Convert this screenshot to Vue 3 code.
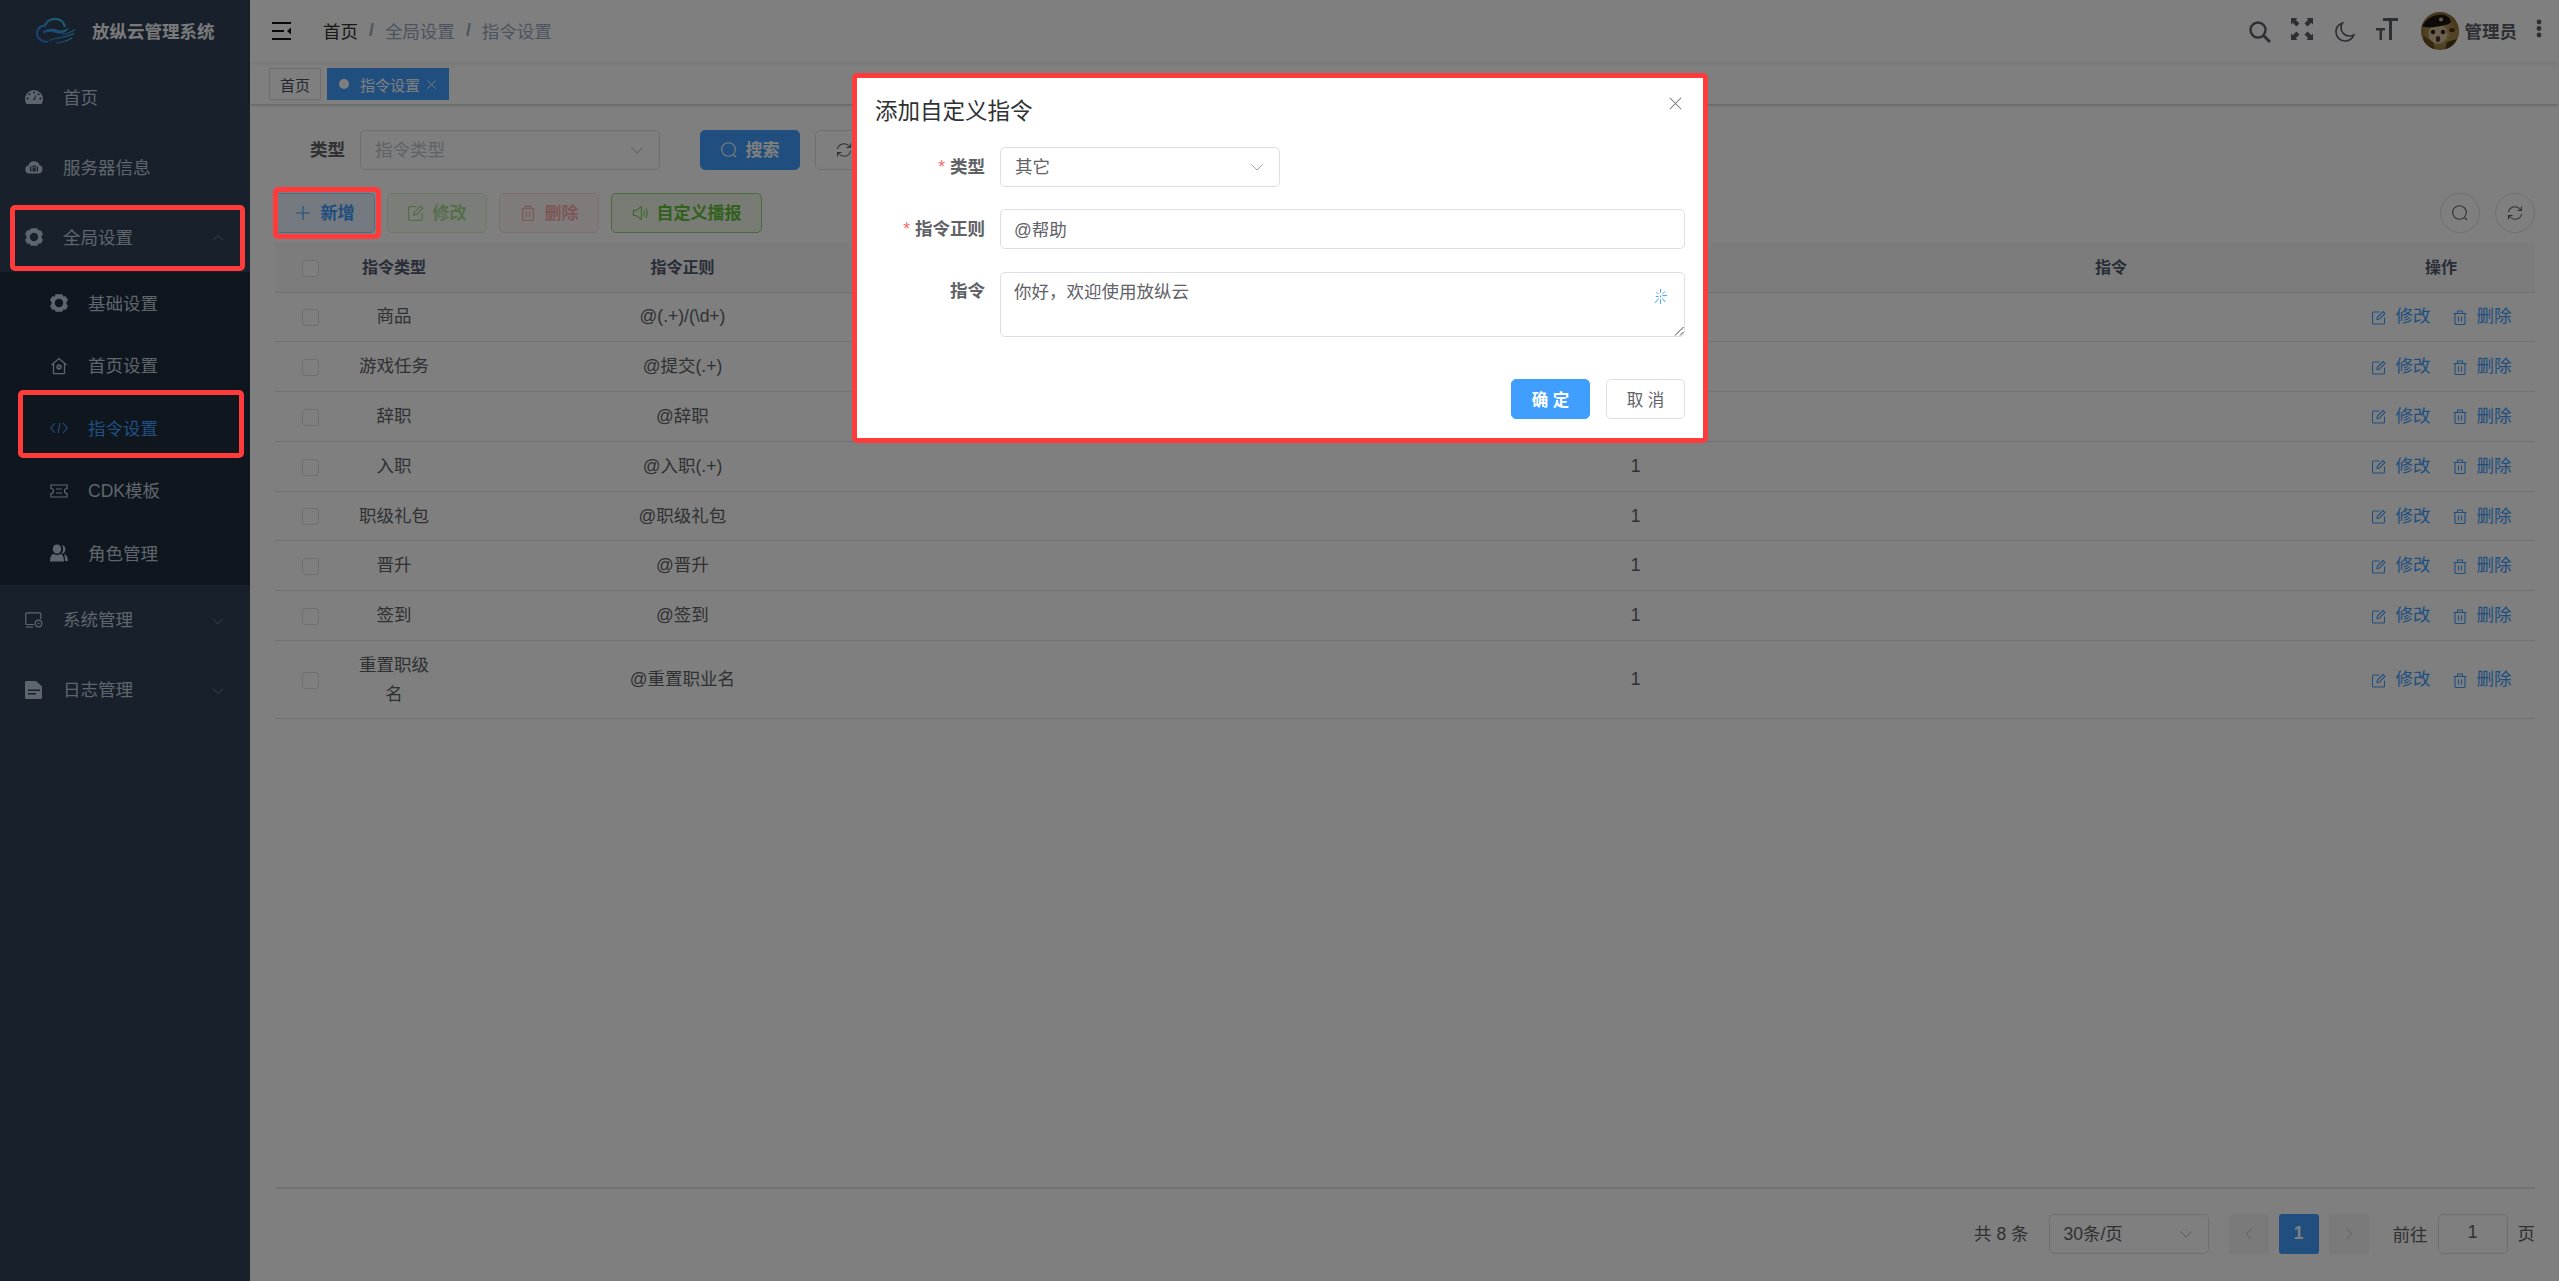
<script setup>
const subMenus = [
  { label: '基础设置', icon: 'i-gear' },
  { label: '首页设置', icon: 'i-home' },
  { label: '指令设置', icon: 'i-code', active: true },
  { label: 'CDK模板', icon: 'i-ticket' },
  { label: '角色管理', icon: 'i-users' }
]
const rows = [
  { type: '商品', reg: '@(.+)/(\\d+)', val: '1' },
  { type: '游戏任务', reg: '@提交(.+)', val: '1' },
  { type: '辞职', reg: '@辞职', val: '1' },
  { type: '入职', reg: '@入职(.+)', val: '1' },
  { type: '职级礼包', reg: '@职级礼包', val: '1' },
  { type: '晋升', reg: '@晋升', val: '1' },
  { type: '签到', reg: '@签到', val: '1' },
  { type: '重置职级名', reg: '@重置职业名', val: '1', tall: true }
]
</script>

<template>
  <div class="app">
    <svg class="sprite" aria-hidden="true">
      <defs>
        <symbol id="i-gauge" viewBox="0 0 18 14">
          <path fill="currentColor" d="M9 0a9 9 0 0 0-9 9c0 1.9.6 3.6 1.600 5h14.800c1-1.400 1.600-3.100 1.600-5a9 9 0 0 0-9-9z"/>
          <g fill="#304156"><circle cx="9" cy="2.400" r="1"/><circle cx="4.400" cy="4.200" r="1"/><circle cx="2.600" cy="8.600" r="1"/><circle cx="15.400" cy="8.600" r="1"/><circle cx="13.600" cy="4.200" r="1"/><path d="M11.500 3.800 10 10h-2z"/></g>
        </symbol>
        <symbol id="i-cloud" viewBox="0 0 18 14">
          <path fill="currentColor" d="M4 13.500a4 4 0 0 1-.6-7.900A5.800 5.800 0 0 1 14.400 5 4.400 4.400 0 0 1 14 13.500z"/>
          <g fill="#304156"><rect x="5" y="6.500" width="1.400" height="5"/><rect x="7.600" y="5.500" width="3" height="6"/><rect x="11.600" y="6.500" width="1.400" height="5"/></g>
          <rect x="8.500" y="7" width="1.200" height="1.200" fill="currentColor"/>
        </symbol>
        <symbol id="i-gear" viewBox="0 0 18 18">
          <path fill="currentColor" fill-rule="evenodd" d="M6.200.3h5.600c.5 0 .9.300 1 .7l.5 1.500 1.600-.3c.5-.1.900.1 1.200.5l1.600 2.800c.2.400.2.900-.1 1.200L16.500 8v2l1.100 1.300c.3.300.3.800.1 1.200l-1.600 2.800c-.3.400-.7.600-1.200.5l-1.600-.3-.5 1.500c-.1.400-.5.700-1 .7H6.200c-.5 0-.9-.3-1-.7l-.5-1.500-1.600.3c-.5.100-.9-.1-1.200-.5L.3 12.500c-.2-.4-.2-.9.100-1.200L1.500 10V8L.4 6.700C.1 6.400.1 5.900.3 5.500l1.600-2.800c.3-.4.700-.6 1.200-.5l1.600.3.5-1.500c.1-.4.500-.7 1-.7zM9 4.800a4.200 4.200 0 1 0 0 8.400 4.200 4.200 0 0 0 0-8.400z"/>
        </symbol>
        <symbol id="i-home" viewBox="0 0 18 18">
          <g fill="none" stroke="currentColor" stroke-width="1.300"><path d="M1.500 8 9 1.500 16.500 8M3.500 6.500V16a.6.6 0 0 0 .6.6h9.800a.6.6 0 0 0 .6-.6V6.500"/><circle cx="9" cy="10" r="2"/></g>
          <circle cx="9" cy="10" r=".8" fill="currentColor"/>
        </symbol>
        <symbol id="i-code" viewBox="0 0 18 12">
          <path fill="none" stroke="currentColor" stroke-width="1.100" d="M5 1 .8 6 5 11M13 1l4.200 5L13 11M10 .8 8 11.200"/>
        </symbol>
        <symbol id="i-ticket" viewBox="0 0 18 14">
          <path fill="none" stroke="currentColor" stroke-width="1.200" d="M1 1h16v3.500a2.500 2.500 0 0 0 0 5V13H1V9.500a2.500 2.500 0 0 0 0-5zM6 5h6M6 9h6"/>
        </symbol>
        <symbol id="i-users" viewBox="0 0 18 17">
          <path fill="currentColor" d="M7 0c2.600 0 4.200 2 4.200 4.500S9.600 9.200 7 9.200 2.800 7 2.800 4.500 4.400 0 7 0zM0 17c0-4 1-6.800 3.500-7.800 1 .9 2.300 1.300 3.500 1.300s2.500-.4 3.500-1.300c2.500 1 3.500 3.800 3.500 7.800z"/>
          <path fill="currentColor" d="M12 .5c2.200.4 3.400 2.200 3.400 4.200s-1 3.700-3.100 4.500l-.6-.5c1-1.100 1.400-2.500 1.400-4S12.600 1.800 12 .5zM14 9.500c2.700.8 3.900 3.300 4 7h-3c0-2.800-.2-5.200-1-7z"/>
        </symbol>
        <symbol id="i-monitor" viewBox="0 0 18 16">
          <g fill="none" stroke="currentColor" stroke-width="1.200"><path d="M9 12.500H1.800a1 1 0 0 1-1-1V1.800a1 1 0 0 1 1-1h13a1 1 0 0 1 1 1V7"/><path d="M1 15h7"/><circle cx="13.500" cy="11.500" r="3.300"/></g>
          <circle cx="13.500" cy="11.500" r="1" fill="currentColor"/>
        </symbol>
        <symbol id="i-doc" viewBox="0 0 18 18">
          <path fill="currentColor" fill-rule="evenodd" d="M1.500 0H11l6 5.500V16.500a1.500 1.500 0 0 1-1.500 1.500h-14A1.500 1.500 0 0 1 0 16.500V1.500A1.500 1.500 0 0 1 1.500 0zM3 8.500v1.500h12V8.500zM3 12v1.500h8V12z"/>
        </symbol>
        <symbol id="i-chev" viewBox="0 0 16 16">
          <polyline fill="none" stroke="currentColor" stroke-width="1" points="1.500,5 8,11.500 14.500,5"/>
        </symbol>
        <symbol id="i-search" viewBox="0 0 16 16">
          <g fill="none" stroke="currentColor" stroke-width="1.100"><circle cx="7.500" cy="7.500" r="6.800"/><path d="M12.500 12.500 15 15"/></g>
        </symbol>
        <symbol id="i-refresh" viewBox="0 0 16 16">
          <path fill="none" stroke="currentColor" stroke-width="1.100" d="M1.500 7A6.500 6.500 0 0 1 12.800 4L14.500 5.500M14.500 1.500v4h-4M14.500 9A6.500 6.500 0 0 1 3.200 12L1.500 10.500M1.500 14.500v-4h4"/>
        </symbol>
        <symbol id="i-edit" viewBox="0 0 14 14">
          <path fill="none" stroke="currentColor" stroke-width="1.100" d="M7.500 1.500H1.500a1 1 0 0 0-1 1v10a1 1 0 0 0 1 1h10a1 1 0 0 0 1-1V7M5 9l.5-2.500L11 1l2 2-5.500 5.500z"/>
        </symbol>
        <symbol id="i-trash" viewBox="0 0 14 15">
          <path fill="none" stroke="currentColor" stroke-width="1.100" d="M.5 3.500h13M4.500 3.500V1h5v2.500M2 3.500V13.500a1 1 0 0 0 1 1h8a1 1 0 0 0 1-1V3.500M5.500 6.500v5M8.500 6.500v5"/>
        </symbol>
        <symbol id="i-speaker" viewBox="0 0 18 18">
          <path fill="none" stroke="currentColor" stroke-width="1.100" d="M5 6H1.500v6H5l5.500 4.500v-15zM13 6c1 1.800 1 4.200 0 6M15.500 3.500c2 3.200 2 7.800 0 11"/>
        </symbol>
        <symbol id="i-sparkle" viewBox="0 0 16 16">
          <path fill="none" stroke="currentColor" stroke-width="1" d="M8 0v4M8 7v2M3 8h3M10 7h5M3.500 3 6 5.500M13 2.500 10 5.500M6 10 2 15M10 10l3 4M8 11v5"/>
        </symbol>
        <symbol id="i-plus" viewBox="0 0 14 14">
          <path fill="none" stroke="currentColor" stroke-width="1.100" d="M7 0v14M0 7h14"/>
        </symbol>
        <symbol id="i-x" viewBox="0 0 10 10">
          <path fill="none" stroke="currentColor" stroke-width="1" d="M.5.5l9 9M9.500.5l-9 9"/>
        </symbol>
      </defs>
    </svg>

    <aside class="sidebar">
      <div class="logo">
        <svg class="logo-mark" viewBox="36 18 40 26">
          <defs>
            <linearGradient id="lg" x1="0" y1="1" x2="1" y2="0">
              <stop offset="0" stop-color="#2f70e0"/>
              <stop offset="1" stop-color="#3cc8f0"/>
            </linearGradient>
          </defs>
          <path fill="none" stroke="url(#lg)" stroke-width="2.200" d="M48 42C41 42 37 38 37 33.500 37 28.500 41 25.500 45 25.500 47 21 51 19 55 19 60 19 64 22 65 27"/>
          <path fill="url(#lg)" d="M43 31C48 28 54 28.500 58 30 62 31.500 65 30 69 27.500 67 32 62 34.500 58 33.500 53 32 48 31 43 34z"/>
          <g fill="none" stroke="url(#lg)" stroke-width="1.200">
            <path d="M49 41C56 36 62 40 74 33.500"/>
            <path d="M56 43.500C62 41 66 42.500 72 38"/>
            <path d="M62 35C66 34.500 70 32.500 75 29.500"/>
          </g>
        </svg>
        <span class="logo-title">放纵云管理系统</span>
      </div>

      <nav class="menu">
        <div class="menu-item"><svg class="m-icon gauge"><use href="#i-gauge"/></svg><span class="m-text">首页</span></div>
        <div class="menu-item"><svg class="m-icon gauge"><use href="#i-cloud"/></svg><span class="m-text">服务器信息</span></div>
        <div class="menu-item">
          <svg class="m-icon"><use href="#i-gear"/></svg><span class="m-text">全局设置</span>
          <svg class="m-arrow up"><use href="#i-chev"/></svg>
        </div>
        <div class="submenu">
          <div v-for="s in subMenus" :key="s.label" class="sub-item" :class="{ active: s.active }">
            <svg class="s-icon" :class="s.icon"><use :href="'#' + s.icon"/></svg><span class="m-text">{{ s.label }}</span>
          </div>
        </div>
        <div class="menu-item">
          <svg class="m-icon"><use href="#i-monitor"/></svg><span class="m-text">系统管理</span>
          <svg class="m-arrow"><use href="#i-chev"/></svg>
        </div>
        <div class="menu-item">
          <svg class="m-icon"><use href="#i-doc"/></svg><span class="m-text">日志管理</span>
          <svg class="m-arrow"><use href="#i-chev"/></svg>
        </div>
      </nav>
    </aside>

    <main class="main">
      <header class="navbar">
        <svg class="hamburger" viewBox="0 0 19 18">
          <path fill="none" stroke="currentColor" stroke-width="1.800" d="M0 1h19M0 9h12M0 17h19"/>
          <path fill="currentColor" d="M15 9l4-3.500v7z"/>
        </svg>
        <div class="crumbs">
          <span class="crumb first">首页</span><i>/</i>
          <span class="crumb">全局设置</span><i>/</i>
          <span class="crumb">指令设置</span>
        </div>
        <div class="right-menu">
          <svg class="tool t-search" viewBox="0 0 22 22"><g fill="none" stroke="currentColor"><circle cx="9" cy="9" r="7.500" stroke-width="2.400"/><path d="M14.500 14.500 21 21" stroke-width="3"/></g></svg>
          <svg class="tool t-full" viewBox="0 0 22 22"><g fill="currentColor"><path d="M0 0h6.500L4.800 1.700 8.500 5.400 5.400 8.500 1.700 4.800 0 6.500z"/><path d="M22 0h-6.500l1.700 1.700-3.700 3.700 3.100 3.100 3.700-3.700L22 6.500z"/><path d="M0 22h6.500l-1.700-1.700 3.700-3.700-3.100-3.100-3.700 3.700L0 15.500z"/><path d="M22 22h-6.500l1.700-1.700-3.700-3.700 3.100-3.100 3.700 3.700 1.700-1.700z"/></g></svg>
          <svg class="tool t-moon" viewBox="0 0 20 20"><path fill="none" stroke="currentColor" stroke-width="1.700" d="M7.500 1C3.500 2.300 1 5.800 1 10c0 5 4 9 9 9 4 0 7.500-2.500 8.800-6-1.300.7-2.800 1-4.300 1C9.500 14 6 10.500 6 5.500 6 4 6.500 2.300 7.500 1z"/></svg>
          <svg class="tool t-font" viewBox="0 0 22 22"><g fill="currentColor"><path d="M7 0h15v3h-6v19h-3V3H7z"/><path d="M0 10h9v2.500H6V22H3.500v-9.500H0z"/></g></svg>
          <svg class="avatar" viewBox="0 0 38 38">
            <defs>
              <radialGradient id="ag" cx="50%" cy="55%" r="60%">
                <stop offset="0" stop-color="#d6b472"/>
                <stop offset="1" stop-color="#80632e"/>
              </radialGradient>
              <clipPath id="ac"><circle cx="19" cy="19" r="19"/></clipPath>
            </defs>
            <g clip-path="url(#ac)">
              <rect width="38" height="38" fill="url(#ag)"/>
              <path d="M0 38 3 24 12 30 14 38z" fill="#6a4c1c"/>
              <path d="M28 14l10 4v10l-8 0z" fill="#a8864a"/>
              <ellipse cx="31" cy="18" rx="3" ry="2" fill="#4a3612"/>
              <path d="M26 30l10-3v11H24z" fill="#4d3a14"/>
              <ellipse cx="17" cy="22" rx="9.500" ry="9.500" fill="#d4c0a0"/>
              <path d="M1 14C5 8 10 3 20 2.500c5 0 9 3 10 7 0 2-6 4-13 5C10 15.500 5 16 1 14z" fill="#1b1612"/>
              <circle cx="20" cy="7.500" r="2" fill="#c8b080"/>
              <circle cx="12" cy="20" r="2.200" fill="#2a2115"/>
              <circle cx="22" cy="20" r="2.200" fill="#2a2115"/>
              <ellipse cx="17" cy="27" rx="2.200" ry="3" fill="#5b2f22"/>
            </g>
          </svg>
          <span class="username">管理员</span>
          <svg class="dots" viewBox="0 0 6 19"><g fill="currentColor"><circle cx="3" cy="3" r="2.400"/><circle cx="3" cy="9.500" r="2.400"/><circle cx="3" cy="16" r="2.400"/></g></svg>
        </div>
      </header>

      <div class="tags">
        <span class="tag">首页</span>
        <span class="tag on"><b class="dot"></b>指令设置<svg class="tag-x"><use href="#i-x"/></svg></span>
      </div>

      <section class="content">
        <div class="query">
          <label class="q-label">类型</label>
          <div class="select q-select"><span class="ph">指令类型</span><svg class="chev"><use href="#i-chev"/></svg></div>
          <button class="btn solid b-search"><svg class="b-i"><use href="#i-search"/></svg><span class="b-t">搜索</span></button>
          <button class="btn b-reset"><svg class="b-i"><use href="#i-refresh"/></svg><span class="b-t">重置</span></button>
        </div>

        <div class="toolbar">
          <button class="btn t-primary"><svg class="b-i plus"><use href="#i-plus"/></svg><span class="b-t">新增</span></button>
          <button class="btn t-green dis"><svg class="b-i"><use href="#i-edit"/></svg><span class="b-t">修改</span></button>
          <button class="btn t-red dis"><svg class="b-i"><use href="#i-trash"/></svg><span class="b-t">删除</span></button>
          <button class="btn t-green wide"><svg class="b-i"><use href="#i-speaker"/></svg><span class="b-t">自定义播报</span></button>
          <div class="tb-right">
            <span class="round"><svg><use href="#i-search"/></svg></span>
            <span class="round"><svg><use href="#i-refresh"/></svg></span>
          </div>
        </div>

        <div class="table-wrap">
          <table class="table">
            <colgroup>
              <col class="c1"><col class="c2"><col class="c3"><col class="c4"><col class="c3"><col class="c6"><col class="c7">
            </colgroup>
            <thead>
              <tr>
                <th><span class="check"></span></th>
                <th>指令类型</th><th>指令正则</th><th>指令名称</th><th>状态</th><th>指令</th><th>操作</th>
              </tr>
            </thead>
            <tbody>
              <tr v-for="r in rows" :key="r.type" :class="{ tall: r.tall }">
                <td><span class="check"></span></td>
                <td>{{ r.type }}</td>
                <td>{{ r.reg }}</td>
                <td></td>
                <td>{{ r.val }}</td>
                <td></td>
                <td>
                  <div class="ops">
                    <span class="op"><svg><use href="#i-edit"/></svg>修改</span>
                    <span class="op"><svg><use href="#i-trash"/></svg>删除</span>
                  </div>
                </td>
              </tr>
            </tbody>
          </table>
        </div>

        <footer class="pager">
          <span class="p-t">共 8 条</span>
          <div class="select p-select"><span class="p-t">30条/页</span><svg class="chev"><use href="#i-chev"/></svg></div>
          <span class="pg"><svg><use href="#i-chev"/></svg></span>
          <span class="pg cur">1</span>
          <span class="pg nx"><svg><use href="#i-chev"/></svg></span>
          <span class="goto p-t">前往</span>
          <span class="p-input"><span class="p-t">1</span></span>
          <span class="p-t">页</span>
        </footer>
      </section>
    </main>

    <div class="overlay">
      <div class="dialog">
        <div class="d-head">
          <span class="d-title">添加自定义指令</span>
          <svg class="d-close" viewBox="0 0 14 14"><path fill="none" stroke="currentColor" stroke-width="1.100" d="M1 1l12 12M13 1 1 13"/></svg>
        </div>
        <div class="d-form">
          <div class="f-row">
            <label class="f-label"><i>*</i>类型</label>
            <div class="select d-select"><span class="p-t">其它</span><svg class="chev"><use href="#i-chev"/></svg></div>
          </div>
          <div class="f-row">
            <label class="f-label"><i>*</i>指令正则</label>
            <div class="d-input">@帮助</div>
          </div>
          <div class="f-row">
            <label class="f-label top">指令</label>
            <div class="d-area">
              你好，欢迎使用放纵云
              <svg class="spark"><use href="#i-sparkle"/></svg>
              <svg class="grip" viewBox="0 0 10 10"><path fill="none" stroke="#444" stroke-width="1" d="M9.500 1 1 9.500M9.500 6 6 9.500"/></svg>
            </div>
          </div>
        </div>
        <div class="d-foot">
          <button class="btn d-ok">确 定</button>
          <button class="btn d-no">取 消</button>
        </div>
      </div>

      <span class="mark m-menu"></span>
      <span class="mark m-sub"></span>
      <span class="mark m-add"></span>
      <span class="mark m-dialog"></span>
    </div>
  </div>
</template>

<style>
html, body { margin: 0; padding: 0; background: #fff; overflow: hidden; }
</style>

<style scoped>
* { box-sizing: border-box; }
.app {
  display: flex;
  width: 2559px;
  height: 1281px;
  overflow: hidden;
  font-family: "Liberation Sans", "Noto Sans CJK SC", sans-serif;
  font-size: 17.5px;
  color: #606266;
}
.sprite { position: absolute; width: 0; height: 0; }

/* sidebar */
.sidebar { width: 250px; flex: none; background: #304156; color: #bfcbd9; }
.logo { height: 62px; display: flex; align-items: center; padding-left: 36px; }
.logo-mark { width: 40px; height: 26px; margin-right: 16px; }
.logo-title { font-weight: 700; font-size: 17.5px; color: #fff; opacity: .95; margin-bottom: 2px; }
.menu-item { height: 70px; display: flex; align-items: center; padding-left: 25px; position: relative; }
.m-text { margin-bottom: 2px; }
.m-icon { width: 18px; height: 18px; margin-right: 20px; flex: none; }
.m-icon.gauge { height: 14px; }
.m-arrow { position: absolute; left: 212px; top: 30px; width: 12px; height: 12px; color: #8f98a3; }
.m-arrow.up { transform: rotate(180deg); }
.submenu { background: #1f2d3d; }
.sub-item { height: 62.5px; display: flex; align-items: center; padding-left: 50px; }
.sub-item.active { color: #409eff; }
.s-icon { width: 18px; height: 18px; margin-right: 20px; flex: none; }
.s-icon.i-code { height: 12px; }
.s-icon.i-ticket { height: 14px; }

/* main */
.main { flex: 1; min-width: 0; display: flex; flex-direction: column; background: #fff; }
.navbar { height: 63px; flex: none; display: flex; align-items: center; padding: 0 17px 2px 22px; box-shadow: 0 1px 4px rgba(0,21,41,.08); position: relative; }
.hamburger { width: 19px; height: 18px; color: #111; margin-right: 32px; }
.crumbs { display: flex; align-items: center; color: #97a8be; }
.crumbs i { font-style: normal; margin: 0 11px; color: #97a8be; font-weight: 700; }
.crumb.first { color: #303133; }
.right-menu { margin-left: auto; display: flex; align-items: center; color: #5a5e66; }
.tool { width: 22px; height: 22px; flex: none; }
.t-search { margin-right: 20px; margin-top: 3px; }
.t-full { margin-right: 22px; margin-top: -3px; }
.t-moon { width: 20px; height: 20px; margin-right: 21px; margin-top: 2px; }
.t-font { margin-right: 23px; margin-top: -3px; }
.avatar { width: 38px; height: 38px; margin-right: 6px; }
.username { font-weight: 700; margin-right: 19px; }
.dots { width: 6px; height: 19px; margin-top: -4px; }

.tags { height: 41px; flex: none; display: flex; align-items: flex-start; gap: 6px; padding: 5px 0 0 19px; font-size: 15px; box-shadow: 0 1px 3px rgba(0,0,0,.24), 0 0 3px rgba(0,0,0,.04); position: relative; }
.tag { height: 32px; padding: 0 10px; border: 1px solid #d8dce5; display: inline-flex; align-items: center; color: #495060; background: #fff; }
.tag.on { background: #409eff; border-color: #409eff; color: #fff; padding: 0 11px; width: 122px; }
.dot { width: 10px; height: 10px; border-radius: 50%; background: #fff; margin-right: 11px; flex: none; }
.tag-x { width: 9px; height: 9px; margin-left: 7px; flex: none; }

.content { flex: 1; min-height: 0; display: flex; flex-direction: column; padding: 26px 24px 28px 25px; }
.query { display: flex; align-items: center; height: 40px; }
.q-label { padding-left: 35px; width: 85px; font-weight: 700; color: #606266; flex: none; white-space: nowrap; margin-bottom: 3px; }
.select { border: 1px solid #dcdfe6; border-radius: 5px; height: 40px; display: flex; align-items: center; padding: 0 14px; position: relative; background: #fff; color: #606266; }
.q-select { width: 300px; margin-right: 40px; }
.ph { color: #c0c4cc; margin-bottom: 3px; }
.chev { width: 14px; height: 14px; position: absolute; right: 15px; top: 12px; color: #a0a4ac; }
.btn { font: inherit; font-weight: 700; font-size: 17px; height: 40px; width: 100px; border-radius: 5px; border: 1px solid #dcdfe6; background: #fff; color: #606266; display: inline-flex; align-items: center; justify-content: center; padding: 0; }
.b-t { margin-bottom: 3px; }
.b-i { width: 16px; height: 16px; margin-right: 9px; flex: none; }
.b-i.plus { width: 14px; height: 14px; margin-right: 11px; }
.solid { background: #409eff; border-color: #409eff; color: #fff; }
.b-reset { margin-left: 15px; }

.toolbar { display: flex; gap: 12px; margin-top: 23px; align-items: center; height: 40px; }
.t-primary { background: #e8f4ff; border-color: #a3d3ff; color: #409eff; }
.t-green { background: #f0f9eb; border-color: #c2e7b0; color: #67c23a; }
.t-green.wide { width: 151px; border-color: #95d475; }
.t-red { background: #fef0f0; border-color: #fbc4c4; color: #f56c6c; }
.dis { opacity: .55; }
.tb-right { margin-left: auto; display: flex; gap: 15px; }
.round { width: 40px; height: 40px; border: 1px solid #dcdfe6; border-radius: 50%; display: flex; align-items: center; justify-content: center; color: #606266; }
.round svg { width: 16px; height: 16px; }

.table-wrap { flex: 1; min-height: 0; margin-top: 10px; }
.table { width: 2260px; table-layout: fixed; border-collapse: separate; border-spacing: 0; }
.c1 { width: 70px; }
.c2 { width: 98px; }
.c3 { width: 479px; }
.c4 { width: 474px; }
.c6 { width: 472px; }
.c7 { width: 188px; }
.table th, .table td { text-align: center; border-bottom: 1px solid #dfe6ec; padding: 0 12px; line-height: 29px; }
.table th { height: 49.5px; background: #f8f8f9; color: #515a6e; font-size: 16px; font-weight: 700; }
.table td { height: 49.8px; }
.table tr.tall td { height: 78px; }
.check { display: inline-block; width: 17px; height: 17px; border: 1px solid #dcdfe6; border-radius: 3px; background: #fff; vertical-align: middle; }
.ops { display: flex; justify-content: center; gap: 22px; padding-left: 1px; }
.op { display: inline-flex; align-items: center; color: #409eff; white-space: nowrap; }
.op svg { width: 14px; height: 15px; margin-right: 10px; flex: none; margin-top: 1px; }

.pager { flex: none; display: flex; align-items: center; border-top: 2px solid #dfe6ec; padding-top: 25px; justify-content: flex-end; color: #606266; height: 66px; }
.p-t { margin-bottom: 3px; }
.p-select { width: 160px; margin: 0 20px; }
.pg { width: 40px; height: 40px; background: #f4f4f5; border-radius: 3px; display: flex; align-items: center; justify-content: center; color: #a8abb2; margin-right: 10px; }
.pg svg { width: 12px; height: 12px; transform: rotate(90deg); }
.pg.nx svg { transform: rotate(-90deg); }
.pg.cur { background: #409eff; color: #fff; font-weight: 700; }
.goto { margin: 0 10px 0 14px; }
.p-input { width: 70px; height: 40px; border: 1px solid #dcdfe6; border-radius: 5px; display: flex; align-items: center; justify-content: center; margin-right: 10px; }

/* dialog */
.overlay { position: fixed; inset: 0; background: rgba(0,0,0,.5); }
.dialog { position: absolute; left: 855px; top: 75px; width: 850px; height: 366px; background: #fff; }
.d-head { height: 72px; display: flex; align-items: center; justify-content: space-between; padding: 0 23px 0 20px; }
.d-title { font-size: 22.5px; color: #303133; margin-bottom: 4px; }
.d-close { width: 13px; height: 13px; color: #808389; margin-top: -16px; }
.d-form { display: flex; flex-direction: column; gap: 22px; padding-right: 20px; }
.f-row { display: flex; align-items: flex-start; }
.f-label { width: 130px; margin-right: 15px; text-align: right; line-height: 40px; font-weight: 700; color: #606266; flex: none; }
.f-label i { color: #f56c6c; font-style: normal; margin-right: 5px; font-weight: 400; }
.d-select { width: 280px; }
.d-select .chev { color: #909399; }
.d-input { flex: 1; height: 40px; border: 1px solid #dcdfe6; border-radius: 5px; padding: 0 13px; line-height: 40px; color: #606266; }
.d-area { flex: 1; height: 65px; margin-top: 1px; border: 1px solid #dcdfe6; border-radius: 5px; padding: 5px 13px; line-height: 28px; color: #606266; position: relative; }
.spark { position: absolute; width: 15px; height: 15px; right: 16px; top: 16px; color: #409eff; }
.grip { position: absolute; width: 10px; height: 10px; right: 0; bottom: 0; }
.d-foot { display: flex; justify-content: flex-end; gap: 16px; padding: 42px 20px 0 0; }
.d-ok { width: 79px; background: #409eff; border-color: #409eff; color: #fff; font-size: 16.5px; }
.d-no { width: 79px; font-size: 16.5px; font-weight: 400; color: #606266; }

/* annotation frames */
.mark { position: absolute; border: 5px solid #ff3b3b; border-radius: 5px; pointer-events: none; }
.m-menu { left: 10px; top: 205px; width: 235px; height: 66px; }
.m-sub { left: 18px; top: 390px; width: 226px; height: 68px; }
.m-add { left: 273px; top: 187px; width: 108px; height: 52px; }
.m-dialog { left: 852px; top: 73px; width: 856px; height: 370px; }
</style>
